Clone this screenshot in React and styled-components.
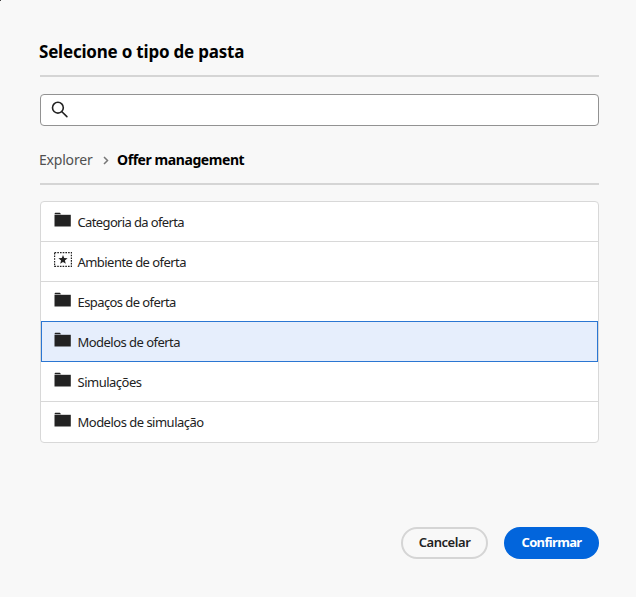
import React from "react";
import styled, { createGlobalStyle } from "styled-components";

const GlobalStyle = createGlobalStyle`
  * { box-sizing: border-box; }
  body { margin: 0; background: #f8f8f8; font-family: "Noto Sans", "Open Sans", sans-serif; }
`;

const Dialog = styled.main`
  position: relative;
  display: flex;
  flex-direction: column;
  width: 636px;
  height: 597px;
  padding: 38px 37px 0 40px;
  background: #f8f8f8;
  overflow: hidden;
`;

const Corner = styled.span`
  position: absolute;
  top: 0;
  left: 0;
  width: 1px;
  height: 1px;
  background: #444;
`;

const Title = styled.h1`
  margin: 0 0 0 -1px;
  height: 37px;
  font-size: 17px;
  line-height: 27px;
  font-weight: 700;
  letter-spacing: -0.21px;
  color: #000;
  white-space: nowrap;
`;

const Divider = styled.hr`
  width: 559px;
  height: 2px;
  margin: 0;
  border: 0;
  background: #d5d5d5;
`;

const SearchField = styled.label`
  display: flex;
  align-items: center;
  height: 32px;
  margin-top: 17px;
  padding: 0 10px;
  background: #fff;
  border: 1px solid #929292;
  border-radius: 4px;
`;

const SearchInput = styled.input`
  flex: 1;
  border: 0;
  outline: 0;
  background: transparent;
  font: inherit;
`;

const Breadcrumbs = styled.nav`
  display: flex;
  align-items: flex-start;
  height: 57px;
  margin-left: -1px;
  padding-top: 24px;
  font-size: 14px;
  line-height: 20px;
  white-space: nowrap;
`;

const Crumb = styled.span`
  width: ${(p) => (p.$current ? "auto" : "54px")};
  color: ${(p) => (p.$current ? "#000" : "#505050")};
  font-weight: ${(p) => (p.$current ? 700 : 400)};
  letter-spacing: ${(p) => p.$tracking}px;
`;

const CrumbArrow = styled.svg`
  width: 7px;
  height: 9px;
  margin: 6px 8px 0 9px;
`;

const List = styled.ul`
  list-style: none;
  height: 242px;
  margin: 16px 0 0;
  padding: 0;
  background: #fff;
  border: 1px solid #d8d8d8;
  border-radius: 4px;
`;

const Row = styled.li`
  display: flex;
  align-items: center;
  height: ${(p) => (p.$selected ? 41 : 40)}px;
  margin-top: ${(p) => (p.$selected ? -1 : 0)}px;
  padding: ${(p) => (p.$selected ? "0 12px" : "1px 13px 0")};
  color: #222;
  background: ${(p) => (p.$selected ? "#e6eefc" : "transparent")};
  border-style: solid;
  border-width: ${(p) => (p.$selected ? "1px" : "0 0 1px")};
  border-color: ${(p) => (p.$selected ? "#2b76d2" : "#d8d8d8")};
  &:last-child { border-color: transparent; }
`;

const RowIcon = styled.svg`
  flex: none;
  width: 18px;
  height: 16px;
  margin: -4px 5.5px 0 0;
`;

const RowLabel = styled.span`
  font-size: 13px;
  line-height: 20px;
  letter-spacing: ${(p) => p.$tracking}px;
  white-space: nowrap;
`;

const Actions = styled.footer`
  display: flex;
  justify-content: flex-end;
  gap: 16px;
  margin-top: 84px;
`;

const Button = styled.button`
  display: flex;
  align-items: center;
  justify-content: center;
  width: ${(p) => (p.$primary ? 95 : 87)}px;
  height: 32px;
  padding: 0 0 2px;
  border: ${(p) => (p.$primary ? "0" : "2px solid #d5d5d5")};
  border-radius: 16px;
  background: ${(p) => (p.$primary ? "#0265dc" : "#f8f8f8")};
  color: ${(p) => (p.$primary ? "#fff" : "#222")};
  font-family: inherit;
  font-size: 13px;
  font-weight: ${(p) => (p.$primary ? 700 : 600)};
  letter-spacing: ${(p) => (p.$primary ? -0.65 : -0.45)}px;
`;

const SearchIcon = () => (
  <svg width="18" height="18" viewBox="0 0 18 18" fill="none" stroke="#222" strokeWidth="1.6" strokeLinecap="round">
    <circle cx="6.9" cy="6.7" r="5.4" />
    <path d="M10.9 10.7l5 4.9" />
  </svg>
);

const FolderIcon = () => (
  <RowIcon viewBox="0 0 18 16" fill="#222">
    <path d="M0.6 2.2V1.4L1.2 0.8h4.6l1.4 1.4z" />
    <path d="M0.5 2.8h16.3v11.7H0.5z" />
  </RowIcon>
);

const EnvironmentIcon = () => (
  <RowIcon viewBox="0 0 18 16">
    <rect x="0.6" y="0.6" width="16.8" height="13.8" fill="none" stroke="#222" strokeWidth="1.2" strokeDasharray="1.6 1.1" />
    <path fill="#222" d="M9 3l1.2 3.1 3.4.2-2.7 2.1.9 3.3L9 9.9l-2.8 1.8.9-3.3-2.7-2.1 3.4-.2z" />
  </RowIcon>
);

const rows = [
  { label: "Categoria da oferta", tracking: -0.63 },
  { label: "Ambiente de oferta", tracking: -0.55, Icon: EnvironmentIcon },
  { label: "Espaços de oferta", tracking: -0.58 },
  { label: "Modelos de oferta", tracking: -0.53, selected: true },
  { label: "Simulações", tracking: -0.5 },
  { label: "Modelos de simulação", tracking: -0.51 },
];

export default function App() {
  return (
    <>
      <GlobalStyle />
      <Dialog>
        <Corner />
        <Title>Selecione o tipo de pasta</Title>
        <Divider />
        <SearchField>
          <SearchIcon />
          <SearchInput aria-label="Pesquisar" />
        </SearchField>
        <Breadcrumbs>
          <Crumb $tracking={-0.2}>Explorer</Crumb>
          <CrumbArrow viewBox="0 0 7 9" fill="none" stroke="#777" strokeWidth="1.5">
            <path d="M2 1l3.5 3.5L2 8" />
          </CrumbArrow>
          <Crumb $current $tracking={-0.43}>Offer management</Crumb>
        </Breadcrumbs>
        <Divider />
        <List>
          {rows.map(({ label, tracking, selected, Icon = FolderIcon }) => (
            <Row key={label} $selected={selected}>
              <Icon />
              <RowLabel $tracking={tracking}>{label}</RowLabel>
            </Row>
          ))}
        </List>
        <Actions>
          <Button>Cancelar</Button>
          <Button $primary>Confirmar</Button>
        </Actions>
      </Dialog>
    </>
  );
}
